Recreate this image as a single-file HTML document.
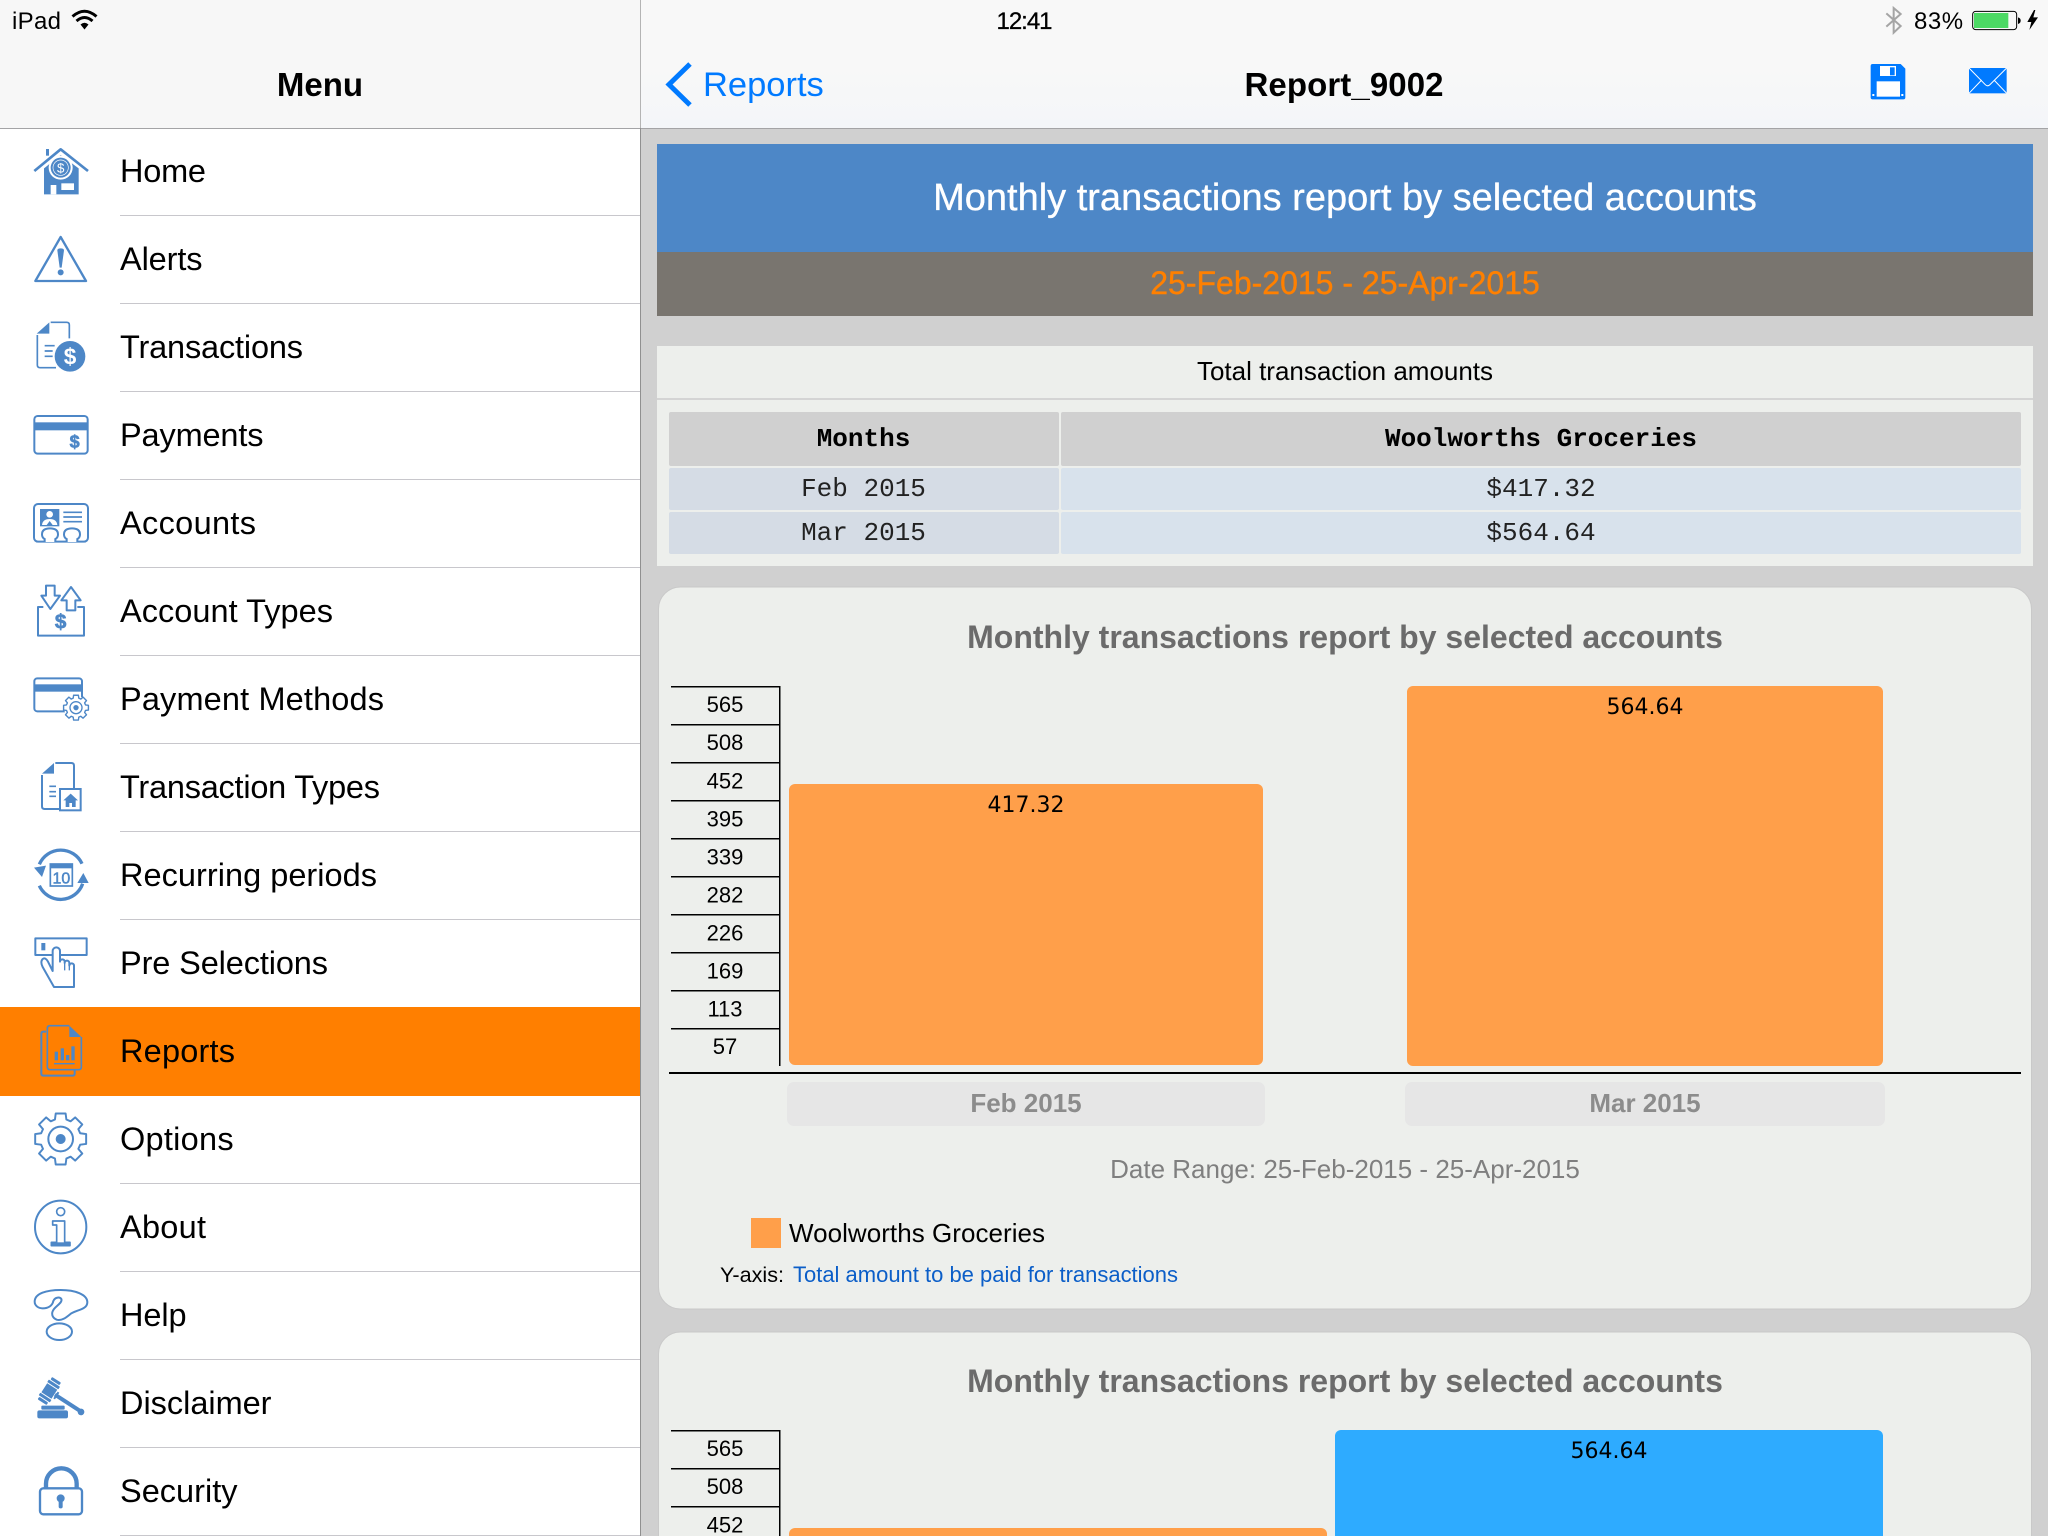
<!DOCTYPE html>
<html lang="en">
<head>
<meta charset="utf-8">
<title>Report_9002</title>
<style>
html,body{margin:0;padding:0;background:#d0d0d0;width:2048px;height:1536px;overflow:hidden}
svg{display:block;position:absolute;left:0;top:0}
text{font-family:"Liberation Sans",sans-serif;white-space:pre}
.m text{font-size:32.5px;fill:#000}
.mono{font-family:"Liberation Mono",monospace;font-size:26px;fill:#222}
.monob{font-family:"Liberation Mono",monospace;font-size:26px;font-weight:bold;fill:#000}
.y{font-size:22px;text-anchor:middle;fill:#000}
.v{font-family:"DejaVu Sans",sans-serif;font-size:22px;text-anchor:middle;fill:#000}
.ct{font-size:32px;font-weight:bold;text-anchor:middle;fill:#6b6b6b}
.xl{font-size:26px;font-weight:bold;text-anchor:middle;fill:#8c8c8c}
.ic{fill:none;stroke:#4d87c7;stroke-linejoin:round}
.f{fill:#4d87c7;stroke:none}
</style>
</head>
<body>
<svg width="2048" height="1536" viewBox="0 0 2048 1536" xmlns="http://www.w3.org/2000/svg">
<defs>
<linearGradient id="nv" x1="0" y1="0" x2="0" y2="1"><stop offset="0" stop-color="#f8f8f8"/><stop offset=".5" stop-color="#f8f8f8"/><stop offset="1" stop-color="#f4f6f9"/></linearGradient>
<path id="gear" d="M98,19 L75,22 L68,38 L83,56 L56,83 L38,68 L22,75 L19,98 L-19,98 L-22,75 L-38,68 L-56,83 L-83,56 L-68,38 L-75,22 L-98,19 L-98,-19 L-75,-22 L-68,-38 L-83,-56 L-56,-83 L-38,-68 L-22,-75 L-19,-98 L19,-98 L22,-75 L38,-68 L56,-83 L83,-56 L68,-38 L75,-22 L98,-19 Z"/>
</defs>

<!-- panes -->
<rect x="0" y="0" width="2048" height="1536" fill="#d0d0d0"/>
<rect x="0" y="129" width="640" height="1407" fill="#fff"/>
<rect x="0" y="0" width="640" height="128" fill="#f7f7f7"/>
<rect x="641" y="0" width="1407" height="128" fill="url(#nv)"/>
<rect x="0" y="128" width="2048" height="1" fill="#a4a4a6"/>
<rect x="640" y="0" width="1" height="128" fill="#b4b4b4"/>
<rect x="640" y="128" width="1" height="1408" fill="#909090"/>

<!-- status bar -->
<text x="12" y="29" font-size="24" fill="#000" textLength="49">iPad</text>
<g fill="none" stroke="#000" stroke-width="3">
<path d="M72.5,16.5 Q84.5,6 96.5,16.5"/>
<path d="M76.5,21 Q84.5,14 92.5,21"/>
</g>
<path d="M80.5,24.5 L84.5,29.5 L88.5,24.5 Q84.5,21 80.5,24.5 Z" fill="#000"/>
<text x="1024" y="29" font-size="24" text-anchor="middle" letter-spacing="-1" stroke="#000" stroke-width=".3" fill="#000">12:41</text>
<text x="1914" y="29" font-size="24" fill="#000" letter-spacing=".5">83%</text>
<g transform="translate(1748,0) scale(.33333)">
<path d="M415,40 L458,78 L437,98 V24 L458,42 L415,80" fill="none" stroke="#a5a5a5" stroke-width="6"/>
<rect x="674" y="34" width="132" height="55" rx="9" fill="none" stroke="#000" stroke-width="3"/>
<rect x="678" y="39" width="103" height="45" fill="#4cd964"/>
<path d="M810,52 Q818,54 818,62 Q818,70 810,72 Z" fill="#000"/>
<path d="M858,30 L838,66 L850,66 L844,90 L870,52 L856,52 L862,30 Z" fill="#000"/>
<!-- save icon -->
<path d="M374,192 H458 L472,206 V292 Q472,298 466,298 H374 Q368,298 368,292 V198 Q368,192 374,192 Z" fill="#007aff"/>
<rect x="396" y="198" width="48" height="30" fill="#fff"/>
<rect x="426" y="202" width="14" height="24" fill="#007aff"/>
<rect x="386" y="244" width="70" height="46" fill="#fff"/>
<rect x="373" y="282" width="6" height="6" fill="#fff"/>
<rect x="460" y="282" width="6" height="6" fill="#fff"/>
<!-- mail icon -->
<rect x="663" y="204" width="113" height="76" fill="#007aff"/>
<path d="M663,204 L712,254 Q719,261 726,254 L776,204 M663,280 L701,240 M776,280 L738,240" fill="none" stroke="#fff" stroke-width="3"/>
</g>

<!-- nav -->
<text x="320" y="96" font-size="33" font-weight="bold" text-anchor="middle" fill="#000">Menu</text>
<path d="M690,64 L669,84.5 L690,105" fill="none" stroke="#007aff" stroke-width="5"/>
<text x="703" y="96" font-size="34.5" fill="#007aff">Reports</text>
<text x="1344" y="96" font-size="33" font-weight="bold" text-anchor="middle" fill="#000" textLength="199">Report_9002</text>

<!-- menu -->
<rect x="0" y="1007" width="640" height="89" fill="#ff7f00"/>
<g fill="#c8c7cc">
<rect x="120" y="215" width="520" height="1"/><rect x="120" y="303" width="520" height="1"/><rect x="120" y="391" width="520" height="1"/><rect x="120" y="479" width="520" height="1"/><rect x="120" y="567" width="520" height="1"/><rect x="120" y="655" width="520" height="1"/><rect x="120" y="743" width="520" height="1"/><rect x="120" y="831" width="520" height="1"/><rect x="120" y="919" width="520" height="1"/><rect x="120" y="1183" width="520" height="1"/><rect x="120" y="1271" width="520" height="1"/><rect x="120" y="1359" width="520" height="1"/><rect x="120" y="1447" width="520" height="1"/><rect x="120" y="1535" width="520" height="1"/>
</g>
<g class="m">
<text x="120" y="182" textLength="86">Home</text>
<text x="120" y="270" textLength="82.5">Alerts</text>
<text x="120" y="358" textLength="183">Transactions</text>
<text x="120" y="446" textLength="143.5">Payments</text>
<text x="120" y="534" textLength="136">Accounts</text>
<text x="120" y="622" textLength="213">Account Types</text>
<text x="120" y="710" textLength="264">Payment Methods</text>
<text x="120" y="798" textLength="260">Transaction Types</text>
<text x="120" y="886" textLength="257">Recurring periods</text>
<text x="120" y="974" textLength="208">Pre Selections</text>
<text x="120" y="1062" textLength="115">Reports</text>
<text x="120" y="1150" textLength="113.6">Options</text>
<text x="120" y="1238" textLength="86">About</text>
<text x="120" y="1326" textLength="66.6">Help</text>
<text x="120" y="1414" textLength="151.5">Disclaimer</text>
<text x="120" y="1502" textLength="117.5">Security</text>
</g>

<!-- icons block 1 -->
<g transform="translate(20,135) scale(.33333)" stroke-width="6">
<!-- home -->
<rect class="f" x="78" y="42" width="9" height="20"/>
<path class="ic" d="M43,108 L122,43 L204,108" stroke-width="8"/>
<path class="f" d="M72,100 L122,60 L176,100 V178 H72 Z"/>
<rect x="92" y="150" width="17" height="28" fill="#fff"/>
<rect x="124" y="145" width="38" height="20" fill="#fff"/>
<circle cx="122" cy="98" r="36" fill="#fff"/>
<circle class="f" cx="122" cy="98" r="30"/>
<circle cx="122" cy="98" r="23" fill="none" stroke="#fff" stroke-width="2"/>
<text x="122" y="113" font-size="40" text-anchor="middle" fill="#fff">$</text>
<!-- alert -->
<path class="ic" d="M122,306 L198,438 H46 Z" stroke-width="7"/>
<path class="f" d="M112,346 Q112,340 122,340 Q132,340 132,346 L125,398 H119 Z"/>
<circle class="f" cx="122" cy="412" r="9"/>
<!-- transactions -->
<path class="ic" d="M92,562 H140 Q148,562 148,570 V610 M52,600 V690 Q52,698 60,698 H108" stroke-width="5"/>
<path class="f" d="M88,562 V596 H50 Z"/>
<path class="ic" d="M74,632 H104 M74,648 H98 M74,664 H98" stroke-width="5"/>
<circle cx="150" cy="664" r="50" fill="#fff"/>
<circle class="f" cx="150" cy="664" r="46"/>
<text x="150" y="688" font-size="68" font-weight="bold" text-anchor="middle" fill="#fff">$</text>
<!-- payments -->
<rect class="ic" x="43" y="843" width="160" height="113" rx="10"/>
<rect class="f" x="43" y="862" width="160" height="24"/>
<text x="164" y="937" font-size="54" font-weight="bold" text-anchor="middle" fill="#4d87c7" stroke="#4d87c7" stroke-width="2">$</text>
<!-- accounts -->
<rect class="ic" x="42" y="1107" width="162" height="113" rx="12"/>
<rect class="f" x="60" y="1122" width="58" height="52"/>
<circle cx="89" cy="1138" r="10" fill="#fff"/>
<path d="M66,1170 Q68,1152 89,1152 Q110,1152 112,1170 L98,1170 L89,1158 L80,1170 Z" fill="#fff"/>
<path class="ic" d="M130,1132 H186 M130,1146 H186 M130,1160 H186" stroke-width="5"/>
<path d="M74,1221 V1212 Q66,1208 66,1198 Q66,1180 90,1180 Q114,1180 114,1198 Q114,1208 106,1212 V1221 M140,1221 V1212 Q132,1208 132,1198 Q132,1180 156,1180 Q180,1180 180,1198 Q180,1208 172,1212 V1221" fill="#fff" stroke="#4d87c7" stroke-width="6"/>
</g>

<!-- icons block 2 -->
<g transform="translate(20,575) scale(.33333)" stroke-width="6">
<!-- account types -->
<path class="ic" d="M78,32 H104 V62 H120 L91,102 L64,62 H78 Z"/>
<path class="ic" d="M153,36 L182,76 H166 V106 H140 V76 H124 Z"/>
<path class="ic" d="M70,96 H54 V182 H192 V96 H172"/>
<text x="122" y="161" font-size="62" font-weight="bold" text-anchor="middle" fill="#4d87c7" stroke="#4d87c7" stroke-width="2">$</text>
<!-- payment methods -->
<rect class="ic" x="43" y="310" width="143" height="99" rx="9"/>
<rect class="f" x="43" y="328" width="143" height="22"/>
<circle cx="168" cy="398" r="36" fill="#fff"/>
<use href="#gear" transform="translate(168,398) scale(.38)" fill="#fff" stroke="#4d87c7" stroke-width="11" stroke-linejoin="round"/>
<circle cx="168" cy="398" r="18" fill="none" stroke="#4d87c7" stroke-width="4"/>
<circle class="f" cx="168" cy="398" r="8"/>
<!-- transaction types -->
<path class="ic" d="M106,564 H154 Q162,564 162,572 V642 M66,600 V694 Q66,702 74,702 H118"/>
<path class="f" d="M102,564 V596 H66 Z"/>
<path class="ic" d="M88,634 H108 M88,650 H108 M88,664 H108" stroke-width="5"/>
<rect x="120" y="642" width="62" height="64" fill="#fff" stroke="#4d87c7" stroke-width="6"/>
<path class="f" d="M152,656 L174,676 H167 V696 H156 V684 H148 V696 H137 V676 H130 Z"/>
<!-- recurring -->
<path class="ic" d="M58,868 A70,70 0 0 1 186,866" stroke-width="10"/>
<path class="ic" d="M58,932 A70,70 0 0 0 188,926" stroke-width="10"/>
<path class="f" d="M42,878 L78,872 L66,906 Z"/>
<path class="f" d="M172,924 H206 L190,894 Z"/>
<rect x="91" y="867" width="66" height="66" fill="#fff" stroke="#4d87c7" stroke-width="5"/>
<rect class="f" x="90" y="866" width="68" height="14"/>
<text x="124" y="926" font-size="48" text-anchor="middle" fill="#4d87c7" stroke="#4d87c7" stroke-width="1.5">10</text>
<!-- pre selections -->
<rect class="ic" x="46" y="1090" width="154" height="50"/>
<rect class="f" x="64" y="1104" width="12" height="22"/>
<path d="M98,1188 L84,1160 Q76,1146 68,1152 Q60,1160 68,1176 L102,1236 H162 V1172 A7,7 0 0 0 148,1172 V1164 A7,7 0 0 0 134,1164 V1160 A7,7 0 0 0 120,1160 V1128 A11,11 0 0 0 98,1128 Z" fill="#fff" stroke="#4d87c7" stroke-width="6" stroke-linejoin="round"/>
<path class="ic" d="M134,1162 V1186 M148,1172 V1186" stroke-width="4"/>
</g>

<!-- icons block 3 -->
<g transform="translate(20,1015) scale(.33333)" stroke-width="6">
<!-- reports -->
<path class="ic" d="M148,32 H90 Q82,32 82,40 V156 Q82,164 90,164 H176 Q184,164 184,156 V66" stroke-width="5"/>
<path class="f" d="M148,32 L184,66 H148 Z"/>
<path class="ic" d="M78,50 H70 Q64,50 64,56 V176 Q64,182 70,182 H158 Q164,182 164,176 V166" stroke-width="6"/>
<rect class="f" x="104" y="110" width="10" height="26"/>
<rect class="f" x="122" y="100" width="10" height="36"/>
<rect class="f" x="138" y="120" width="10" height="16"/>
<rect class="f" x="154" y="94" width="10" height="42"/>
<path class="ic" d="M102,146 H164" stroke-width="4"/>
<!-- options -->
<use href="#gear" transform="translate(122,372) scale(.78)" fill="none" stroke="#4d87c7" stroke-width="7.5" stroke-linejoin="round"/>
<circle cx="122" cy="372" r="37" fill="none" stroke="#4d87c7" stroke-width="6"/>
<circle class="f" cx="122" cy="372" r="15"/>
<!-- about -->
<ellipse class="ic" cx="122" cy="636" rx="77" ry="79"/>
<circle class="ic" cx="122" cy="590" r="12" stroke-width="5"/>
<path class="ic" d="M98,618 H134 V682 H150 V692 H94 V682 H110 V630 H98 Z" stroke-width="5"/>
<rect class="f" x="94" y="682" width="56" height="11"/>
<!-- help -->
<path class="ic" d="M44,860 C44,835 80,825 122,825 C165,825 202,838 202,862 C202,885 165,885 150,898 C138,908 125,918 110,914 C96,908 92,895 102,882 C112,870 128,862 124,852 C118,844 104,848 100,858 C97,872 85,880 68,880 C55,880 44,872 44,860 Z"/>
<ellipse class="ic" cx="118" cy="950" rx="38" ry="25"/>
<!-- disclaimer -->
<g transform="translate(88,1128) rotate(33)">
<rect class="f" x="-16" y="-40" width="32" height="9" rx="3"/>
<rect class="f" x="-20" y="-28" width="40" height="9" rx="2"/>
<rect class="f" x="-18" y="-16" width="36" height="32"/>
<rect class="f" x="-20" y="19" width="40" height="9" rx="2"/>
<rect class="f" x="-16" y="31" width="32" height="9" rx="3"/>
<rect class="f" x="20" y="-6" width="90" height="12"/>
<rect class="f" x="22" y="-12" width="6" height="24"/>
<circle class="f" cx="114" cy="1" r="10"/>
</g>
<rect class="f" x="64" y="1172" width="70" height="12" rx="3"/>
<rect class="f" x="52" y="1186" width="92" height="24" rx="6"/>
<!-- security -->
<path class="ic" d="M78,1420 V1406 A45,45 0 0 1 170,1406 V1420" stroke-width="13"/>
<rect x="60" y="1420" width="126" height="78" rx="10" fill="#fff" stroke="#4d87c7" stroke-width="7"/>
<circle class="f" cx="122" cy="1450" r="12"/>
<rect class="f" x="116" y="1450" width="12" height="30" rx="5"/>
</g>

<!-- header banners -->
<rect x="657" y="144" width="1376" height="108" fill="#4d87c7"/>
<rect x="657" y="252" width="1376" height="64" fill="#79756f"/>
<text x="1345" y="210" font-size="38" text-anchor="middle" fill="#fff" stroke="#fff" stroke-width=".3">Monthly transactions report by selected accounts</text>
<text x="1345" y="294" font-size="32" text-anchor="middle" fill="#ff8000" stroke="#ff8000" stroke-width=".4">25-Feb-2015 - 25-Apr-2015</text>

<!-- table panel -->
<rect x="657" y="346" width="1376" height="220" fill="#edefec"/>
<rect x="657" y="398" width="1376" height="2" fill="#d4d4d4"/>
<text x="1345" y="380" font-size="26" text-anchor="middle" fill="#000" textLength="296">Total transaction amounts</text>
<rect x="669" y="412" width="390" height="54" rx="2" fill="#d0d0d0"/>
<rect x="1061" y="412" width="960" height="54" rx="2" fill="#d0d0d0"/>
<rect x="669" y="468" width="390" height="42" rx="2" fill="#d5dce5"/>
<rect x="1061" y="468" width="960" height="42" rx="2" fill="#d8e2ec"/>
<rect x="669" y="512" width="390" height="42" rx="2" fill="#d5dce5"/>
<rect x="1061" y="512" width="960" height="42" rx="2" fill="#d8e2ec"/>
<text class="monob" x="863.5" y="446" text-anchor="middle">Months</text>
<text class="monob" x="1541" y="446" text-anchor="middle">Woolworths Groceries</text>
<text class="mono" x="863.5" y="496" text-anchor="middle">Feb 2015</text>
<text class="mono" x="1541" y="496" text-anchor="middle">$417.32</text>
<text class="mono" x="863.5" y="540" text-anchor="middle">Mar 2015</text>
<text class="mono" x="1541" y="540" text-anchor="middle">$564.64</text>

<!-- chart card 1 -->
<rect x="658.5" y="587" width="1373" height="722" rx="22" fill="#edefec" stroke="#c9c9c9" stroke-width="1"/>
<text class="ct" x="1345" y="648">Monthly transactions report by selected accounts</text>
<g fill="#000">
<rect x="671" y="686" width="108" height="1.5"/><rect x="671" y="724" width="108" height="1.5"/><rect x="671" y="762" width="108" height="1.5"/><rect x="671" y="800" width="108" height="1.5"/><rect x="671" y="838" width="108" height="1.5"/><rect x="671" y="876" width="108" height="1.5"/><rect x="671" y="914" width="108" height="1.5"/><rect x="671" y="952" width="108" height="1.5"/><rect x="671" y="990" width="108" height="1.5"/><rect x="671" y="1028" width="108" height="1.5"/>
<rect x="779" y="686" width="1.5" height="380"/>
<rect x="669" y="1072" width="1352" height="2"/>
</g>
<text class="y" x="725" y="712">565</text>
<text class="y" x="725" y="750">508</text>
<text class="y" x="725" y="788.5">452</text>
<text class="y" x="725" y="826.5">395</text>
<text class="y" x="725" y="864.5">339</text>
<text class="y" x="725" y="902.5">282</text>
<text class="y" x="725" y="940.5">226</text>
<text class="y" x="725" y="978.5">169</text>
<text class="y" x="725" y="1016.5">113</text>
<text class="y" x="725" y="1054">57</text>
<rect x="789" y="784" width="474" height="281" rx="6" fill="#ff9f4a"/>
<rect x="1407" y="686" width="476" height="380" rx="6" fill="#ff9f4a"/>
<text class="v" x="1026" y="812">417.32</text>
<text class="v" x="1645" y="714">564.64</text>
<rect x="787" y="1082" width="478" height="44" rx="7" fill="#e6e6e6"/>
<rect x="1405" y="1082" width="480" height="44" rx="7" fill="#e6e6e6"/>
<text class="xl" x="1026" y="1112">Feb 2015</text>
<text class="xl" x="1645" y="1112">Mar 2015</text>
<text x="1345" y="1178" font-size="26" text-anchor="middle" fill="#7f7f7f">Date Range: 25-Feb-2015 - 25-Apr-2015</text>
<rect x="751" y="1218" width="30" height="30" fill="#ff9f4a"/>
<text x="789" y="1242" font-size="26" fill="#000" textLength="256">Woolworths Groceries</text>
<text x="720" y="1282" font-size="21.6" fill="#000">Y-axis:</text>
<text x="793" y="1282" font-size="22" fill="#0b5ec8" textLength="385">Total amount to be paid for transactions</text>

<!-- chart card 2 -->
<rect x="658.5" y="1332" width="1373" height="260" rx="22" fill="#edefec" stroke="#c9c9c9" stroke-width="1"/>
<text class="ct" x="1345" y="1392">Monthly transactions report by selected accounts</text>
<g fill="#000">
<rect x="671" y="1430" width="108" height="1.5"/><rect x="671" y="1468" width="108" height="1.5"/><rect x="671" y="1506" width="108" height="1.5"/>
<rect x="779" y="1430" width="1.5" height="106"/>
</g>
<text class="y" x="725" y="1456">565</text>
<text class="y" x="725" y="1494">508</text>
<text class="y" x="725" y="1532.5">452</text>
<rect x="789" y="1528" width="538" height="40" rx="6" fill="#ff9f4a"/>
<rect x="1335" y="1430" width="548" height="140" rx="6" fill="#2eabff"/>
<text class="v" x="1609" y="1458">564.64</text>
</svg>
</body>
</html>
